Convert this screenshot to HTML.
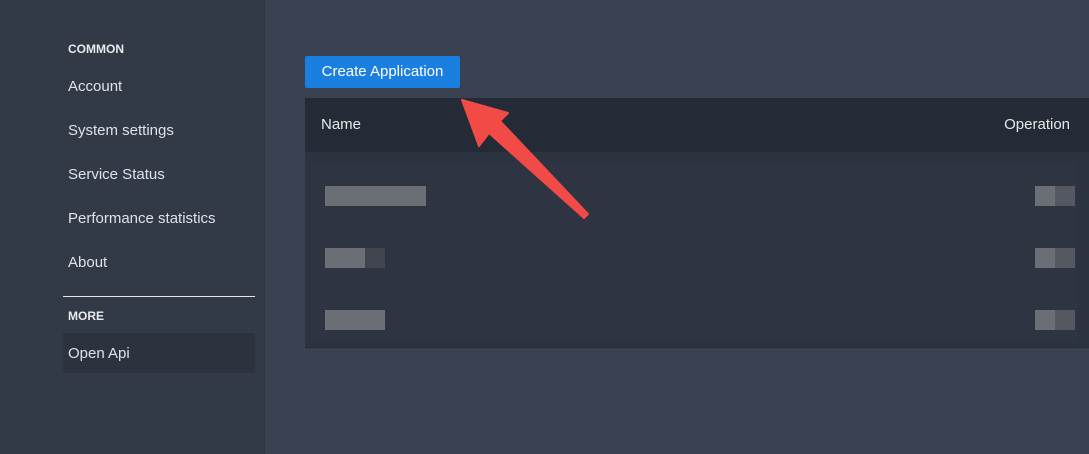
<!DOCTYPE html>
<html><head><meta charset="utf-8"><style>
*{margin:0;padding:0;box-sizing:border-box}
body{width:1089px;height:454px;overflow:hidden;background:#3a4252;font-family:"Liberation Sans",sans-serif;position:relative}
.side{position:absolute;left:0;top:0;width:265px;height:454px;background:#323a48}
.h{position:absolute;left:68px;font-size:12px;font-weight:bold;color:#e8eaee}
.it{position:absolute;left:68px;font-size:15px;color:#dfe2e7}
.hr{position:absolute;left:63px;top:296px;width:192px;height:1px;background:#e6e6e6}
.sel{position:absolute;left:63px;top:333px;width:192px;height:40px;background:#2c323e}
.btn{position:absolute;left:305px;top:56px;width:155px;height:32px;background:#1a7fdf;border-radius:2px;color:#fff;font-size:15px;text-align:center;line-height:32px}
.th{position:absolute;left:305px;top:98px;width:784px;height:54px;background:#252b36;color:#e6e8ec;font-size:15px}
.tb{position:absolute;left:305px;top:152px;width:784px;height:196px;background:#2c3340;border-bottom:1px solid #252b36}
.b{position:absolute;background:#6b6e74}
.d{position:absolute;background:#555860}
</style></head><body>
<div class="side"></div>
<div class="h" style="top:42px">COMMON</div>
<div class="it" style="top:78px">Account</div>
<div class="it" style="top:122px">System settings</div>
<div class="it" style="top:166px">Service Status</div>
<div class="it" style="top:210px">Performance statistics</div>
<div class="it" style="top:254px">About</div>
<div class="hr"></div>
<div class="h" style="top:309px">MORE</div>
<div class="sel"></div>
<div class="it" style="top:345px">Open Api</div>
<div class="btn">Create Application</div>
<div class="th"><span style="position:absolute;left:16px;top:18px">Name</span><span style="position:absolute;right:19px;top:18px">Operation</span></div>
<div class="tb">
<div style="position:absolute;left:6px;top:10px;width:766px;height:180px;background:#2e3441"></div>
<div class="b" style="left:20px;top:34px;width:101px;height:20px"></div>
<div class="b" style="left:20px;top:96px;width:40px;height:20px"></div>
<div class="d" style="left:60px;top:96px;width:20px;height:20px;background:#40454f"></div>
<div class="b" style="left:20px;top:158px;width:60px;height:20px"></div>
<div class="b" style="left:730px;top:34px;width:20px;height:20px"></div><div class="d" style="left:750px;top:34px;width:20px;height:20px"></div>
<div class="b" style="left:730px;top:96px;width:20px;height:20px"></div><div class="d" style="left:750px;top:96px;width:20px;height:20px"></div>
<div class="b" style="left:730px;top:158px;width:20px;height:20px"></div><div class="d" style="left:750px;top:158px;width:20px;height:20px"></div>
</div>
<svg style="position:absolute;left:0;top:0" width="1089" height="454">
<path d="M462 100 L508 113 L500 121 L588 214 L584 218 L489 133 L479 146 Z" fill="#f24a46" stroke="#f24a46" stroke-width="2" stroke-linejoin="round"/>
</svg>
</body></html>
